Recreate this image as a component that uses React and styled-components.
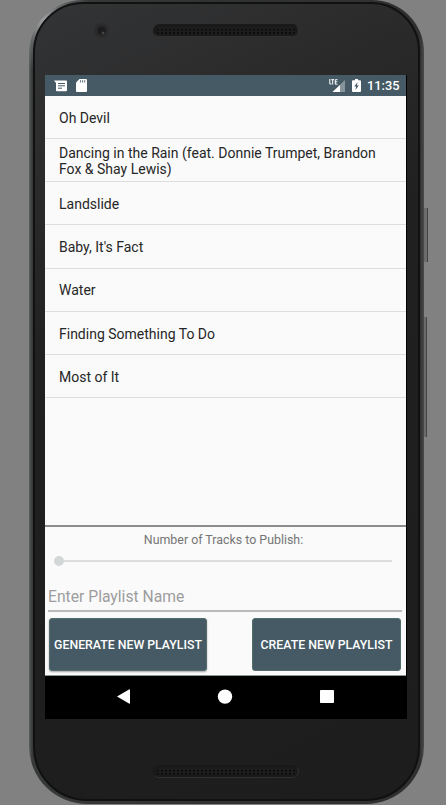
import React from "react";
import styled, { createGlobalStyle } from "styled-components";

const GlobalStyle = createGlobalStyle`
  * { box-sizing: border-box; }
  html, body { margin: 0; padding: 0; overflow: hidden; background: #818181; }
  body { font-family: Roboto, "Liberation Sans", sans-serif; }
`;

const Stage = styled.main`
  width: 446px;
  height: 805px;
  padding-left: 29px;
  overflow: hidden;
  background: #818181;
`;

const Phone = styled.div`
  position: relative;
  width: 395px;
  height: 804px;
  padding: 2px 4px 3px;
  border-radius: 54px 52px 58px 58px;
  background:
    radial-gradient(circle at 12px 18px, #a0a4a4 0, rgba(130, 134, 134, 0.6) 22px, transparent 52px),
    linear-gradient(90deg, #5c6060 0, #383a3a 3px, #303232 50%, #303030 391px, #4a4a4a 395px);
`;

const Face = styled.div`
  display: flex;
  flex-direction: column;
  align-items: flex-start;
  width: 387px;
  height: 799px;
  padding-left: 10px;
  border: 2px solid #111;
  border-radius: 50px 49px 54px 54px;
  background: linear-gradient(155deg, #333435 0, #2b2b2c 18%, #202020 38%, #1d1d1d 100%);
`;

const SideButton = styled.div`
  position: absolute;
  left: ${(p) => p.$left}px;
  top: ${(p) => p.$top}px;
  width: ${(p) => p.$width}px;
  height: ${(p) => p.$height}px;
  border-right: 1px solid #444;
  background: #6a6c6c;
`;

const Bezel = styled.div`
  display: flex;
  width: 100%;
  height: ${(p) => p.$height}px;
  padding: ${(p) => p.$pad};
`;

const Camera = styled.div`
  width: 15px;
  height: 15px;
  margin: -1px 44px 0 0;
  border-radius: 50%;
  background: radial-gradient(circle at 9px 10px, #777 0, #333 1px, transparent 2px),
    radial-gradient(circle, #1b1b1d 0 3px, #29292a 5px, #303031 100%);
`;

const Grille = styled.div`
  width: 146px;
  height: 13px;
  padding: 2px 3px;
  border: 1px solid #191919;
  border-right-color: #333;
  border-bottom-color: #303030;
  border-radius: 7px;
  background: radial-gradient(circle, #0a0a0a 0 0.8px, #1d1d1d 1.3px) 3px 1px / 4px 3.3px content-box, #1a1a1a;
`;

const Screen = styled.section`
  display: flex;
  flex-direction: column;
  width: 362px;
  height: 644px;
  border-right: 1px solid #000;
  background: #fafafa;
`;

const StatusBar = styled.header`
  display: flex;
  align-items: center;
  flex: 0 0 21px;
  padding: 0 7px 0 9px;
  background: #455a64;
  color: #fff;
`;

const StatusGlyph = styled.svg`
  display: block;
  flex: none;
  margin-left: ${(p) => p.$gap || 0}px;
`;

const Spacer = styled.div`
  flex: 1;
`;

const Clock = styled.span`
  width: 32px;
  margin-left: 6px;
  font-size: 12.8px;
  font-weight: 500;
  line-height: 21px;
  white-space: nowrap;
`;

const TrackList = styled.ul`
  flex: 0 0 429px;
  margin: 0;
  padding: 0;
  list-style: none;
`;

const Track = styled.li`
  display: flex;
  align-items: center;
  height: 43.2px;
  padding: 2px 24px 0 14px;
  border-bottom: 1px solid #dedede;
  color: #262626;
  font-size: 14px;
  line-height: 16.5px;

  &:first-child { height: 43px; }
`;

const Controls = styled.form`
  display: flex;
  flex-direction: column;
  height: 151px;
  border-top: 2px solid #8b8d8d;
  border-bottom: 1px solid #8d9696;
  overflow: hidden;
`;

const SliderLabel = styled.div`
  height: 24px;
  padding-right: 4px;
  color: #757575;
  font-size: 12.4px;
  line-height: 26px;
  text-align: center;
`;

const Slider = styled.div`
  display: flex;
  align-items: center;
  height: 20px;
  padding: 0 14px 0 9px;
`;

const Thumb = styled.span`
  width: 10px;
  height: 10px;
  border-radius: 50%;
  background: #d2d7d7;
`;

const Rail = styled.span`
  flex: 1;
  height: 2px;
  background: #dcdede;
`;

const NameField = styled.div`
  height: 41px;
  margin: 0 4px 0 3px;
  padding-top: 16px;
  border-bottom: 2px solid #b9bbbb;
  color: #9d9d9d;
  font-size: 15.7px;
  line-height: 20px;
`;

const Actions = styled.div`
  display: flex;
  justify-content: space-between;
  padding: 6px 5px 0 4px;
`;

const ActionButton = styled.button`
  width: ${(p) => p.$width}px;
  height: 53px;
  padding: 2px 0 0;
  border: 1px solid #536d6d;
  border-radius: 3px;
  background: #455a64;
  box-shadow: ${(p) => (p.$raised ? "0 1px 2px rgba(0, 0, 0, 0.35)" : "none")};
  color: #fff;
  font: 500 12.3px/49px Roboto, "Liberation Sans", sans-serif;
  white-space: nowrap;
`;

const NavBar = styled.nav`
  flex: 1;
  width: 362px;
  background: #000;
`;

const NavDrawing = styled.svg`
  display: block;
`;

const tracks = [
  "Oh Devil",
  "Dancing in the Rain (feat. Donnie Trumpet, Brandon Fox & Shay Lewis)",
  "Landslide",
  "Baby, It's Fact",
  "Water",
  "Finding Something To Do",
  "Most of It",
];

function StatusIcons() {
  return (
    <StatusBar>
      <StatusGlyph width="13" height="12" viewBox="0 0 13 12">
        <path fill="#fff" d="M0 0.5H12a1 1 0 0 1 1 1v8.8a1 1 0 0 1-1 1H3a1 1 0 0 1-1-1V3z" />
        <path stroke="#455a64" strokeWidth="1" d="M4 3.5h7M4 5.8h7M4 8.2h4" />
      </StatusGlyph>
      <StatusGlyph $gap={9} width="11" height="13" viewBox="0 0 11 13">
        <path fill="#fff" d="M3.5 0H10a1 1 0 0 1 1 1v11a1 1 0 0 1-1 1H1a1 1 0 0 1-1-1V3.5z" />
        <path stroke="#667780" strokeWidth="1.1" d="M4.5 1.2v2.4M6.6 1.2v2.4M8.7 1.2v2.4" />
      </StatusGlyph>
      <Spacer />
      <StatusGlyph width="17" height="14" viewBox="0 0 17 14">
        <path fill="#87949a" d="M16 1v12H3.5z" />
        <path fill="#fff" d="M11 6v7H3.5z" />
        <path fill="none" stroke="#455a64" strokeWidth="3" d="M0 3h9" />
        <path fill="none" stroke="#fff" strokeWidth="1" d="M.8 0v5h1.7M2.2.7h3M3.7.7v4.8M8.5.7H6.3v4.5h2.2M6.3 2.8h2" />
      </StatusGlyph>
      <StatusGlyph $gap={6} width="9" height="13" viewBox="0 0 9 13">
        <path fill="#fff" d="M3 0h3v1.2h2a1 1 0 0 1 1 1V12a1 1 0 0 1-1 1H1a1 1 0 0 1-1-1V2.2a1 1 0 0 1 1-1h2z" />
        <path fill="#455a64" d="M5.5 3.2 2.2 7.4h1.9L3.5 11 6.8 6.6H5z" />
      </StatusGlyph>
      <Clock>11:35</Clock>
    </StatusBar>
  );
}

export default function App() {
  return (
    <>
      <GlobalStyle />
      <Stage>
        <Phone>
          <SideButton $left={395} $top={208} $width={4} $height={54} />
          <SideButton $left={395} $top={317} $width={3} $height={120} />
          <Face>
            <Bezel $height={71} $pad="20px 0 0 49px">
              <Camera />
              <Grille />
            </Bezel>
            <Screen>
              <StatusIcons />
              <TrackList>
                {tracks.map((title) => (
                  <Track key={title}>{title}</Track>
                ))}
              </TrackList>
              <Controls>
                <SliderLabel>Number of Tracks to Publish:</SliderLabel>
                <Slider>
                  <Thumb />
                  <Rail />
                </Slider>
                <NameField>Enter Playlist Name</NameField>
                <Actions>
                  <ActionButton type="button" $width={158} $raised>GENERATE NEW PLAYLIST</ActionButton>
                  <ActionButton type="button" $width={149}>CREATE NEW PLAYLIST</ActionButton>
                </Actions>
              </Controls>
              <NavBar>
                <NavDrawing width="361" height="43" viewBox="0 0 361 43">
                  <path fill="#fff" d="M72 20.4 84 13.5q1-.5 1 .5v13q0 1-1 .5z" />
                  <circle fill="#fff" cx="180" cy="20.6" r="7.2" />
                  <rect fill="#fff" x="275" y="14" width="14" height="13" rx="0.8" />
                </NavDrawing>
              </NavBar>
            </Screen>
            <Bezel $height={76} $pad="46px 0 0 108px">
              <Grille />
            </Bezel>
          </Face>
        </Phone>
      </Stage>
    </>
  );
}
